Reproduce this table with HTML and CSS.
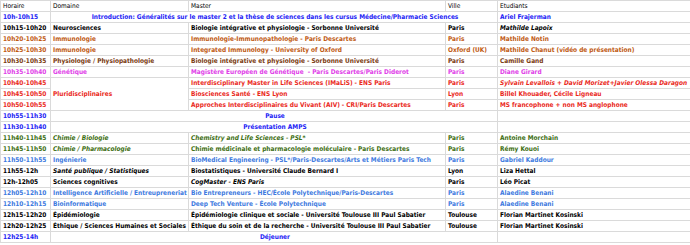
FILE: index.html
```html
<!DOCTYPE html>
<html lang="fr">
<head>
<meta charset="utf-8">
<title>Programme</title>
<link rel="stylesheet" href="styles.css">
</head>
<body>
<table class="sheet">
<colgroup>
<col class="c-time"><col class="c-dom"><col class="c-master"><col class="c-ville"><col class="c-etu">
</colgroup>
<tbody>
<tr class="head"><td>Horaire</td><td>Domaine</td><td>Master</td><td>Ville</td><td>Etudiants</td></tr>
<tr class="blue"><td>10h-10h15</td><td colspan="3" class="center">Introduction: Généralités sur le master 2 et la thèse de sciences dans les cursus Médecine/Pharmacie Sciences</td><td>Ariel Frajerman</td></tr>
<tr class="black"><td>10h15-10h20</td><td>Neurosciences</td><td>Biologie intégrative et physiologie - Sorbonne Université</td><td>Paris</td><td class="it">Mathilde Lapoix</td></tr>
<tr class="brown"><td>10h20-10h25</td><td>Immunologie</td><td>Immunologie-Immunopathologie - Paris Descartes</td><td>Paris</td><td>Mathilde Notin</td></tr>
<tr class="brown"><td>10h25-10h30</td><td>Immunologie</td><td>Integrated Immunology - University of Oxford</td><td>Oxford (UK)</td><td>Mathilde Chanut (vidéo de présentation)</td></tr>
<tr class="dbrown"><td>10h30-10h35</td><td>Physiologie / Physiopathologie</td><td>Biologie intégrative et physiologie - Sorbonne Université</td><td>Paris</td><td>Camille Gand</td></tr>
<tr class="magenta"><td>10h35-10h40</td><td>Génétique</td><td>Magistère Européen de Génétique &nbsp;- Paris Descartes/Paris Diderot</td><td>Paris</td><td>Diane Girard</td></tr>
<tr class="red"><td>10h40-10h45</td><td rowspan="3">Pluridisciplinaires</td><td>Interdisciplinary Master in Life Sciences (IMaLiS) - ENS Paris</td><td>Paris</td><td class="it">Sylvain Levallois + David Morizet+Javier Olessa Daragon</td></tr>
<tr class="red"><td>10h45-10h50</td><td>Biosciences Santé - ENS Lyon</td><td>Lyon</td><td>Billel Khouader, Cécile Ligneau</td></tr>
<tr class="red"><td>10h50-10h55</td><td>Approches Interdisciplinaires du Vivant (AIV) - CRI/Paris Descartes</td><td>Paris</td><td>MS francophone + non MS anglophone</td></tr>
<tr class="blue"><td>10h55-11h30</td><td colspan="3" class="center">Pause</td><td></td></tr>
<tr class="blue"><td>11h30-11h40</td><td colspan="3" class="center">Présentation AMPS</td><td></td></tr>
<tr class="green"><td>11h40-11h45</td><td class="it">Chimie / Biologie</td><td class="it">Chemistry and Life Sciences - PSL*</td><td>Paris</td><td>Antoine Morchain</td></tr>
<tr class="green"><td>11h45-11h50</td><td class="it">Chimie / Pharmacologie</td><td>Chimie médicinale et pharmacologie moléculaire - Paris Descartes</td><td>Paris</td><td>Rémy Kouoi</td></tr>
<tr class="lblue"><td>11h50-11h55</td><td>Ingénierie</td><td>BioMedical Engineering - PSL*/Paris-Descartes/Arts et Métiers Paris Tech</td><td>Paris</td><td>Gabriel Kaddour</td></tr>
<tr class="black"><td>11h55-12h</td><td class="it">Santé publique / Statistiques</td><td>Biostatistiques - Université Claude Bernard I</td><td>Lyon</td><td>Liza Hettal</td></tr>
<tr class="black"><td>12h-12h05</td><td>Sciences cognitives</td><td class="it">CogMaster - ENS Paris</td><td>Paris</td><td>Léo Picat</td></tr>
<tr class="lblue"><td>12h05-12h10</td><td>Intelligence Artificielle / Entreupreneriat</td><td>Bio Entrepreneurs - HEC/École Polytechnique/Paris-Descartes</td><td>Paris</td><td>Alaedine Benani</td></tr>
<tr class="lblue"><td>12h10-12h15</td><td>Bioinformatique</td><td>Deep Tech Venture - École Polytechnique</td><td>Paris</td><td>Alaedine Benani</td></tr>
<tr class="black"><td>12h15-12h20</td><td>Épidémiologie</td><td>Épidémiologie clinique et sociale - Université Toulouse III Paul Sabatier</td><td>Toulouse</td><td>Florian Martinet Kosinski</td></tr>
<tr class="black"><td>12h20-12h25</td><td>Éthique / Sciences Humaines et Sociales</td><td>Éthique du soin et de la recherche - Université Toulouse III Paul Sabatier</td><td>Toulouse</td><td>Florian Martinet Kosinski</td></tr>
<tr class="blue"><td>12h25-14h</td><td colspan="3" class="center">Déjeuner</td><td></td></tr>
</tbody>
</table>
</body>
</html>
```
FILE: styles.css
```css
html, body {
  margin: 0;
  padding: 0;
  background: #ffffff;
}
.sheet {
  border-collapse: collapse;
  table-layout: fixed;
  width: 700px;
  font-family: "DejaVu Sans Condensed", "DejaVu Sans", sans-serif;
  font-stretch: condensed;
  font-size: 6.5px;
  font-weight: bold;
  line-height: 10px;
}
.c-time { width: 50px; }
.c-dom { width: 138px; }
.c-master { width: 257px; }
.c-ville { width: 52px; }
.c-etu { width: 203px; }
.sheet td {
  height: 10px;
  padding: 0 0 0 2px;
  border: 1px solid #dadada;
  white-space: nowrap;
  overflow: hidden;
  vertical-align: middle;
}
.sheet .center { text-align: center; }
.sheet .it { font-style: italic; }
.head td { color: #000; font-weight: normal; }
.blue td { color: #2323f5; }
.black td { color: #000; }
.brown td { color: #c05a12; }
.dbrown td { color: #7a3b10; }
.magenta td { color: #e040e8; }
.red td { color: #ea2a1c; }
.green td { color: #3d6e12; }
.lblue td { color: #3e7ae0; }
```
